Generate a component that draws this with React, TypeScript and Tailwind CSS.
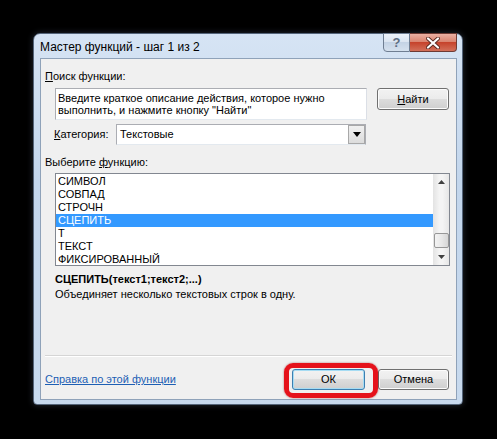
import React from "react";

const items = ["СИМВОЛ", "СОВПАД", "СТРОЧН", "СЦЕПИТЬ", "Т", "ТЕКСТ", "ФИКСИРОВАННЫЙ"];
const selected = "СЦЕПИТЬ";

function Btn({ children, isDefault, className = "" }: { children: React.ReactNode; isDefault?: boolean; className?: string }) {
  return (
    <div
      className={`flex items-center justify-center rounded-[3px] border bg-[linear-gradient(#f2f2f2,#ebebeb_50%,#dddddd_50%,#cfcfcf)] text-[11px] text-black ${
        isDefault ? "border-[#3c7fb1] shadow-[inset_0_0_0_1px_#a6dcf3]" : "border-[#707070] shadow-[inset_0_0_0_1px_#fcfcfc]"
      } ${className}`}
    >
      {children}
    </div>
  );
}

function Arrow({ up }: { up?: boolean }) {
  return (
    <svg width="7" height="4" viewBox="0 0 7 4">
      <path d={up ? "M0 4 L3.5 0 L7 4 Z" : "M0 0 L7 0 L3.5 4 Z"} fill="#404040" />
    </svg>
  );
}

export default function App() {
  return (
    <div className="w-[497px] h-[439px] overflow-hidden bg-black pt-[33px] pl-[33px] font-['Liberation_Sans',Arial,sans-serif] text-[11px] leading-[13px] text-black">
      <div className="flex h-[372px] w-[430px] flex-col rounded-t-[7px] rounded-b-[4px] border border-[#55657a] bg-[linear-gradient(to_bottom,#d6e4f4,#c3d6ec_40%,#c8daee)] shadow-[0_0_6px_rgba(120,140,170,0.3)]">
        {/* title bar */}
        <div className="flex h-[24px] items-start justify-between">
          <div className="pl-[6px] pt-[6px] text-[12px] leading-[14px] text-black">Мастер функций - шаг 1 из 2</div>
          <div className="mr-[5px] -mt-px flex">
            <div className="flex h-[19px] w-[27px] items-center justify-center rounded-bl-[4px] border border-[#6f7e92] bg-[linear-gradient(#eef3f9,#dbe5f1_45%,#c4d3e5_50%,#d5e1ee)] text-[13px] font-bold text-[#5d6d82]">
              ?
            </div>
            <div className="flex h-[19px] w-[47px] items-center justify-center rounded-br-[4px] border border-l-0 border-[#6e3b34] bg-[linear-gradient(#eab0a3,#da8571_45%,#c6432c_50%,#d2705a)]">
              <svg width="14" height="12" viewBox="0 0 14 12">
                <path d="M2 1.5 L12 10.5 M12 1.5 L2 10.5" stroke="#5a2a22" strokeWidth="4" strokeLinecap="round" />
                <path d="M2 1.5 L12 10.5 M12 1.5 L2 10.5" stroke="#ffffff" strokeWidth="2.2" strokeLinecap="round" />
              </svg>
            </div>
          </div>
        </div>

        {/* client area */}
        <div className="ml-[6px] mr-[5px] flex h-[342px] flex-col border border-[#8fa2b9] bg-[#f0f0f0]">
          <div className="mt-[11px] pl-[4px]">
            <span className="underline">П</span>оиск функции:
          </div>

          <div className="mt-[5px] flex items-start pl-[14px]">
            <div className="h-[32px] w-[312px] border border-[#abadb3] border-b-[#e3e9ef] border-r-[#dbdfe6] bg-white pl-[2px] pt-[3px] leading-[12px]">
              Введите краткое описание действия, которое нужно
              <br />
              выполнить, и нажмите кнопку "Найти"
            </div>
            <Btn className="ml-[10px] h-[22px] w-[72px]">
              <span className="underline">Н</span>айти
            </Btn>
          </div>

          <div className="mt-[4px] flex items-center pl-[13px]">
            <div className="w-[62px]">
              <span className="underline">К</span>атегория:
            </div>
            <div className="flex h-[21px] w-[250px] items-center border border-[#abadb3] border-b-[#e3e9ef] bg-white">
              <div className="flex-1 pl-[3px]">Текстовые</div>
              <div className="flex h-[19px] w-[17px] items-center justify-center border border-[#a8a8a8] bg-[linear-gradient(#f0f0f0,#dcdcdc)]">
                <svg width="8" height="5" viewBox="0 0 8 5">
                  <path d="M0 0 L8 0 L4 5 Z" fill="#000" />
                </svg>
              </div>
            </div>
          </div>

          <div className="mt-[11px] pl-[4px]">
            Выберите <span className="underline">ф</span>ункцию:
          </div>

          <div className="ml-[14px] mt-[4px] flex h-[93px] w-[395px] border border-[#828790] bg-white">
            <div className="flex-1 overflow-hidden pt-[1px]">
              {items.map((it) => (
                <div
                  key={it}
                  className={`h-[13px] pl-[2px] leading-[13px] ${it === selected ? "bg-[#3399ff] text-white" : ""}`}
                >
                  {it}
                </div>
              ))}
            </div>
            <div className="flex w-[16px] flex-col items-center bg-[linear-gradient(to_right,#e3e3e3,#f4f4f4_40%,#f4f4f4_60%,#e6e6e6)]">
              <div className="flex h-[17px] items-center justify-center">
                <Arrow up />
              </div>
              <div className="mt-[42px] h-[16px] w-[15px] rounded-[2px] border border-[#979797] bg-[linear-gradient(to_right,#f3f3f3,#e8e8e8_50%,#d6d6d6)]" />
              <div className="mt-auto flex h-[17px] items-center justify-center">
                <Arrow />
              </div>
            </div>
          </div>

          <div className="mt-[7px] pl-[14px] font-bold">СЦЕПИТЬ(текст1;текст2;...)</div>
          <div className="mt-[2px] pl-[14px]">Объединяет несколько текстовых строк в одну.</div>

          <div className="ml-[4px] mt-[54px] h-[2px] w-[407px] border-t border-b border-t-[#d5d5d5] border-b-white" />

          <div className="mt-[12px] flex h-[21px] items-center pl-[4px] pr-[7px]">
            <div className="flex-1 text-[#1d5fb4] underline">Справка по этой функции</div>
            <div className="relative">
              <Btn isDefault className="h-[21px] w-[73px]">
                ОК
              </Btn>
              <div className="absolute -left-[8px] -right-[13px] -top-[6px] -bottom-[8px] rounded-[9px] border-[5px] border-[#e5121b] shadow-[0_0_2px_rgba(120,0,0,0.6)]" />
            </div>
            <Btn className="ml-[13px] h-[21px] w-[71px]">Отмена</Btn>
          </div>
        </div>
      </div>
    </div>
  );
}
